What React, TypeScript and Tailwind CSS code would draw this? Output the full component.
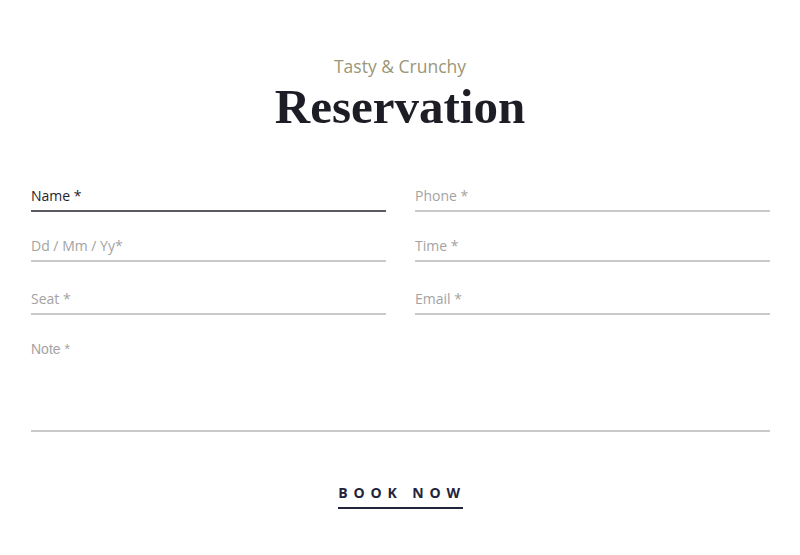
import React from 'react';

const sans = "font-['Open_Sans',_'Noto_Sans',sans-serif]";

function Field({ label, active, className = '' }: { label: string; active?: boolean; className?: string }) {
  return (
    <div
      className={`${sans} text-[14px] leading-[20px] pb-[4px] ${
        active ? 'border-b-2 border-[#5a5a60] font-medium text-[#1e1e2c]' : 'border-b-2 border-[#c9c9c9] text-[#a3a3a3]'
      } ${className}`}
    >
      {label}
    </div>
  );
}

export default function App() {
  return (
    <div className="min-h-[555px] w-[800px] bg-white">
      <div className="flex flex-col items-center pt-[54px]">
        <p className={`${sans} text-[17.5px] leading-[24px] text-[#9b9678]`}>Tasty &amp; Crunchy</p>
        <h1 className="mt-[5px] font-['Liberation_Serif',serif] text-[49px] font-bold leading-[48px] text-[#1d1d26]">
          Reservation
        </h1>
      </div>

      <form className="px-[31px] pr-[30px]">
        <div className="mt-[55px] grid grid-cols-2 gap-x-[29px]">
          <Field label="Name *" active />
          <Field label="Phone *" />
          <Field label="Dd / Mm / Yy*" className="mt-[24px]" />
          <Field label="Time *" className="mt-[24px]" />
          <Field label="Seat *" className="mt-[27px]" />
          <Field label="Email *" className="mt-[27px]" />
        </div>
        <div className="mt-[24px] h-[93px] border-b-2 border-[#c9c9c9] font-['Liberation_Sans',sans-serif] text-[14px] leading-[20px] text-[#a3a3a3]">
          Note *
        </div>

        <div className="mt-[52px] flex justify-center">
          <button
            type="button"
            className={`${sans} whitespace-nowrap border-b-2 border-[#23233a] pb-[5px] text-[14px] font-bold leading-[18px] tracking-[0.42em] text-[#23233a]`}
          >
            <span className="mr-[-0.22em]">BOOK NOW</span>
          </button>
        </div>
      </form>
    </div>
  );
}
